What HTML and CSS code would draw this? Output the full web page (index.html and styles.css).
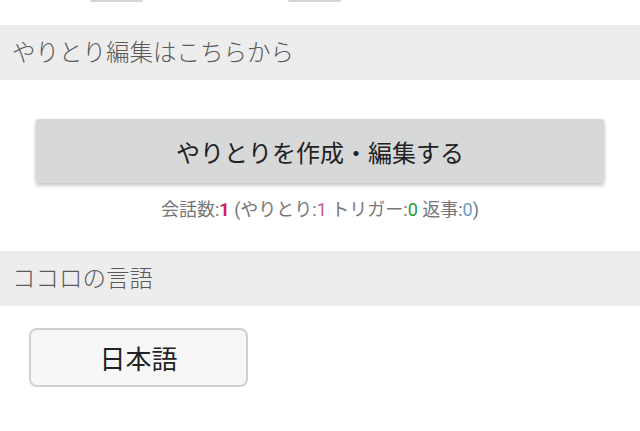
FILE: index.html
```html
<!DOCTYPE html>
<html lang="ja">
<head>
<meta charset="utf-8">
<link rel="stylesheet" href="styles.css">
</head>
<body>
<div class="top-stubs">
  <div class="stub stub-a"></div>
  <div class="stub stub-b"></div>
</div>
<div class="section-head">やりとり編集はこちらから</div>
<div class="section-body edit-body">
  <button class="raised-btn">やりとりを作成・編集する</button>
  <p class="counter">会話数:<span class="n-total">1</span> (やりとり:<span class="n-talk">1</span> トリガー:<span class="n-trigger">0</span> 返事:<span class="n-reply">0</span>)</p>
</div>
<div class="section-head">ココロの言語</div>
<div class="section-body lang-body">
  <button class="lang-btn">日本語</button>
</div>
</body>
</html>
```
FILE: styles.css
```css
html, body {
  margin: 0;
  padding: 0;
  background: #ffffff;
  font-family: Roboto, "Noto Sans CJK JP", sans-serif;
}
.top-stubs {
  height: 25px;
  display: flex;
  align-items: flex-start;
  padding-left: 90px;
  gap: 145px;
}
.stub {
  width: 53px;
  height: 2px;
  background: #d4d4d4;
  border-radius: 0 0 3px 3px;
}
.section-head {
  height: 55px;
  line-height: 56px;
  background: #ededed;
  color: #5a5a5a;
  font-size: 23.5px;
  font-weight: 300;
  padding-left: 12px;
}
.edit-body {
  padding: 39px 36px 30px;
}
.raised-btn {
  display: block;
  width: 100%;
  height: 64px;
  border: none;
  border-radius: 3px;
  background: #d7d8d8;
  box-shadow: 0 2px 4px rgba(0,0,0,0.28);
  font-family: Roboto, "Noto Sans CJK JP", sans-serif;
  font-size: 24px;
  color: #222222;
  padding: 0;
}
.counter {
  margin: 16px 0 0;
  line-height: 22px;
  text-align: center;
  font-size: 18px;
  color: #777777;
}
.n-total { color: #d0215e; font-weight: 700; }
.n-talk { color: #c45a8e; }
.n-trigger { color: #1f9a2a; }
.n-reply { color: #6a9acb; }
.lang-body {
  padding: 22px 29px;
}
.lang-btn {
  width: 219px;
  height: 59px;
  border: 2px solid #d0d0d0;
  border-radius: 8px;
  background: #f7f7f7;
  font-family: Roboto, "Noto Sans CJK JP", sans-serif;
  font-size: 26px;
  color: #222222;
  padding: 0;
}
```
